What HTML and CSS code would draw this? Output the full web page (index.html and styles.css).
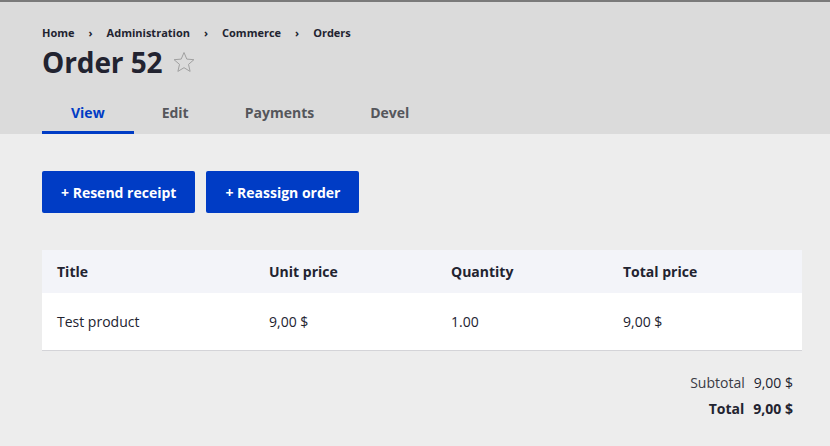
FILE: index.html
```html
<!DOCTYPE html>
<html>
<head>
<meta charset="utf-8">
<link rel="stylesheet" href="styles.css">
</head>
<body>
<header class="page-header">
  <nav class="breadcrumb">
    <a>Home</a><span class="sep">›</span>
    <a>Administration</a><span class="sep">›</span>
    <a>Commerce</a><span class="sep">›</span>
    <a>Orders</a>
  </nav>
  <div class="title-row">
    <h1>Order 52</h1>
    <svg class="star" width="24" height="24" viewBox="0 0 24 24"><path d="M12 2.5l2.8 6.6 7.1.6-5.4 4.7 1.6 7-6.1-3.7-6.1 3.7 1.6-7-5.4-4.7 7.1-.6z" fill="none" stroke="#a0a0a0" stroke-width="1" stroke-linejoin="round"/></svg>
  </div>
  <ul class="tabs">
    <li class="tab active">View</li>
    <li class="tab">Edit</li>
    <li class="tab">Payments</li>
    <li class="tab">Devel</li>
  </ul>
</header>
<main class="content">
  <div class="actions">
    <button class="btn">+ Resend receipt</button>
    <button class="btn">+ Reassign order</button>
  </div>
  <table class="items">
    <colgroup><col class="c1"><col class="c2"><col class="c3"><col class="c4"></colgroup>
    <thead>
      <tr><th>Title</th><th>Unit price</th><th>Quantity</th><th>Total price</th></tr>
    </thead>
    <tbody>
      <tr><td>Test product</td><td>9,00 $</td><td>1.00</td><td>9,00 $</td></tr>
    </tbody>
  </table>
  <div class="summary">
    <div class="line"><span class="label">Subtotal</span><span class="value">9,00 $</span></div>
    <div class="line total"><span class="label">Total</span><span class="value">9,00 $</span></div>
  </div>
</main>
</body>
</html>
```
FILE: styles.css
```css
html, body {
  margin: 0;
  padding: 0;
}
body {
  font-family: "Open Sans", "Noto Sans", sans-serif;
  color: #222330;
  background: #ededed;
  border-top: 2px solid #7a7a7a;
  height: 444px;
  overflow: hidden;
}
.page-header {
  background: #dbdbdb;
  padding: 24px 42px 0;
}
.breadcrumb {
  font-size: 11px;
  font-weight: 700;
  line-height: 14px;
  display: flex;
  align-items: center;
}
.breadcrumb .sep {
  margin: 0 14px 0 14px;
  font-weight: 700;
}
.title-row {
  display: flex;
  align-items: center;
  margin-top: 4px;
  height: 36px;
}
h1 {
  margin: 0;
  font-size: 28px;
  font-weight: 700;
  letter-spacing: -0.1px;
  line-height: 36px;
}
.star {
  margin-left: 10px;
  margin-top: -1px;
}
.tabs {
  list-style: none;
  margin: 14px 0 0;
  padding: 0;
  display: flex;
}
.tab {
  padding: 0 28px;
  height: 40px;
  line-height: 37px;
  font-size: 14px;
  font-weight: 700;
  color: #55565b;
  box-sizing: border-box;
  border-bottom: 3px solid transparent;
}
.tab.active {
  color: #003cc5;
  border-bottom-color: #003cc5;
  padding: 0 29px;
}
.content {
  padding: 37px 28px 0 42px;
}
.actions {
  display: flex;
  gap: 11px;
}
.btn {
  font-family: inherit;
  background: #003cc5;
  color: #fff;
  border: none;
  border-radius: 2px;
  height: 42px;
  padding: 0 19px;
  font-size: 14px;
  font-weight: 700;
}
.items {
  margin-top: 37px;
  width: 760px;
  border-collapse: collapse;
  font-size: 14px;
}
.c1 { width: 212px; }
.c2 { width: 182px; }
.c3 { width: 172px; }
.c4 { width: 194px; }
.items th {
  background: #f3f4f9;
  text-align: left;
  font-weight: 700;
  height: 43px;
  padding: 0 15px;
}
.items td {
  background: #fff;
  height: 57px;
  padding: 0 15px;
  border-bottom: 1px solid #d4d4d8;
}
.summary {
  margin-top: 19px;
  width: 751px;
  display: flex;
  flex-direction: column;
  align-items: flex-end;
  font-size: 14px;
}
.line {
  display: flex;
  gap: 9px;
  height: 26px;
  line-height: 26px;
}
.line .label { color: #3a3b44; }
.total { font-weight: 700; }
.total .label { color: #222330; }
```
